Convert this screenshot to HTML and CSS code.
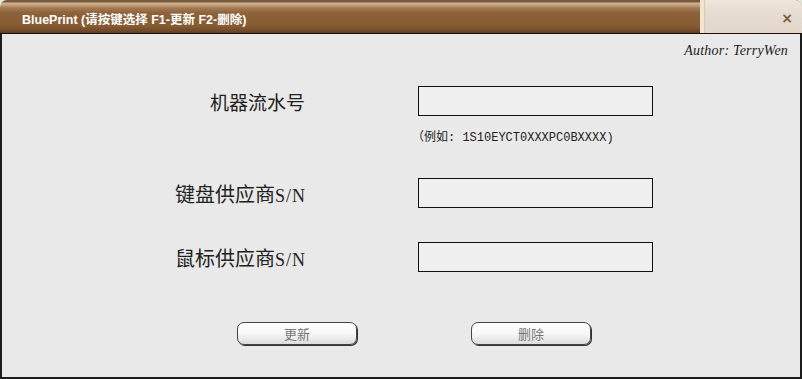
FILE: index.html
```html
<!DOCTYPE html>
<html lang="zh-CN">
<head>
    <meta charset="UTF-8">
    <title>BluePrint</title>
    <link rel="stylesheet" href="styles.css">
</head>
<body>
    <div class="window">
        <div class="titlebar">
            <div class="title">BluePrint (请按键选择 F1-更新 F2-删除)</div>
            <div class="title-right">
                <span class="close">&times;</span>
            </div>
        </div>

        <div class="content">
            <div class="author">Author: TerryWen</div>

            <div class="row first">
                <div class="label sans">机器流水号</div>
                <input class="field" type="text">
            </div>
            <div class="hint">（例如: 1S10EYCT0XXXPC0BXXXX)</div>

            <div class="row">
                <div class="label">键盘供应商<span class="sn">S/N</span></div>
                <input class="field" type="text">
            </div>

            <div class="row">
                <div class="label">鼠标供应商<span class="sn">S/N</span></div>
                <input class="field" type="text">
            </div>

            <div class="buttons">
                <button class="btn">更新</button>
                <button class="btn">删除</button>
            </div>
        </div>
    </div>
</body>
</html>
```

FILE: styles.css
```css
* {
    margin: 0;
    padding: 0;
    box-sizing: border-box;
}

body {
    width: 802px;
    height: 379px;
    background: #dfe9d8;
    font-family: "Liberation Sans", "Noto Sans CJK SC", sans-serif;
    overflow: hidden;
}

.window {
    width: 802px;
    height: 379px;
    display: flex;
    flex-direction: column;
}

/* title bar */
.titlebar {
    height: 34px;
    display: flex;
    border-radius: 7px 7px 0 0;
    overflow: hidden;
    border-bottom: 1px solid #1a1008;
    background: linear-gradient(to bottom,
        #7a5a3c 0px, #7a5a3c 2px,
        #cfb497 3px, #c4a27e 5px,
        #a27a52 8px, #8d623a 13px,
        #875c33 26px, #70492a 31px, #5e3c20 33px);
}

.title {
    flex: 1;
    padding: 9px 0 0 22px;
    color: #fff;
    font-size: 12.5px;
    font-weight: bold;
}

.title-right {
    width: 102px;
    display: flex;
    align-items: center;
    justify-content: flex-end;
    padding-right: 9px;
    border-left: 4px solid #f3e4d2;
    background: linear-gradient(to bottom, #efe6dc, #e6dcd1 40%, #e3d7cb);
    box-shadow: inset 1px 0 0 #d8c8b4;
}

.close {
    color: #7d5c40;
    font-size: 14px;
    font-weight: bold;
    font-family: "DejaVu Sans", sans-serif;
    padding-top: 2px;
}

/* content */
.content {
    flex: 1;
    background: #e9e9e9;
    border-left: 2px solid #1c1c1c;
    border-right: 2px solid #1c1c1c;
    border-bottom: 2px solid #1c1c1c;
    display: flex;
    flex-direction: column;
}

.author {
    padding: 9px 12px 0 0;
    height: 27px;
    text-align: right;
    font-family: "Liberation Serif", serif;
    font-style: italic;
    font-size: 14px;
    letter-spacing: 0.2px;
    color: #222;
}

.row {
    display: flex;
    align-items: center;
    margin-top: 34px;
}

.row.first {
    margin-top: 25px;
}

.label {
    width: 304px;
    text-align: right;
    font-size: 20px;
    color: #222;
    font-family: "Liberation Serif", "Noto Sans CJK SC", serif;
}

.label.sans {
    font-family: "Noto Sans CJK SC", sans-serif;
    font-size: 19px;
    padding-right: 1px;
}

.sn {
    font-family: "Liberation Serif", serif;
    font-size: 18px;
    letter-spacing: 1px;
}

.field {
    margin-left: 112px;
    width: 235px;
    height: 30px;
    border: 1px solid #111;
    background: #f0f0f0;
    outline: none;
}

.hint {
    margin: 11px 0 0 410px;
    height: 17px;
    font-family: "Liberation Mono", "Noto Sans CJK SC", monospace;
    font-size: 12px;
    color: #222;
}

/* buttons */
.buttons {
    display: flex;
    gap: 114px;
    margin-top: 50px;
    padding-left: 235px;
}

.btn {
    width: 120px;
    height: 23px;
    border: 1px solid #444;
    border-radius: 7px;
    background: linear-gradient(to bottom, #ffffff, #f7f7f7 50%, #dcdcdc);
    box-shadow: 1px 1px 0 #333;
    color: #777;
    font-family: "Noto Sans CJK SC", sans-serif;
    font-size: 13px;
}
```
